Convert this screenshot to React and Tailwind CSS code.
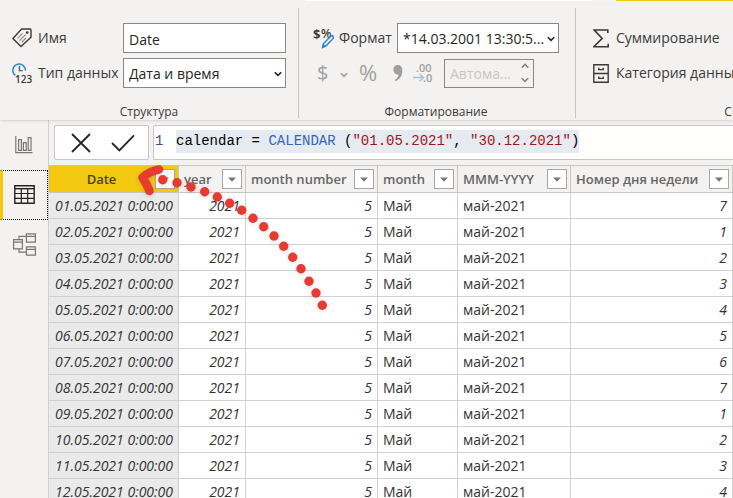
import React from 'react';

const columns = [
  { name: 'Date', width: 'w-[130px]' },
  { name: 'year', width: 'w-[67px]' },
  { name: 'month number', width: 'w-[132px]' },
  { name: 'month', width: 'w-[80px]' },
  { name: 'MMM-YYYY', width: 'w-[113px]' },
  { name: 'Номер дня недели', width: 'w-[162px]' },
];

const rows = [
  ['01.05.2021 0:00:00', 7],
  ['02.05.2021 0:00:00', 1],
  ['03.05.2021 0:00:00', 2],
  ['04.05.2021 0:00:00', 3],
  ['05.05.2021 0:00:00', 4],
  ['06.05.2021 0:00:00', 5],
  ['07.05.2021 0:00:00', 6],
  ['08.05.2021 0:00:00', 7],
  ['09.05.2021 0:00:00', 1],
  ['10.05.2021 0:00:00', 2],
  ['11.05.2021 0:00:00', 3],
  ['12.05.2021 0:00:00', 4],
];

const arrowDots = [
  [162.7, 179.7], [177, 182.7], [191, 187], [204.7, 191.7],
  [217.3, 197], [229.7, 203.3], [241.7, 210.3], [253, 218.3],
  [263.7, 226.7], [274, 236], [283.7, 246.3], [292.7, 257.3],
  [301, 268.7], [309, 281.3], [316, 293], [322.3, 305.3],
];

const Chevron = ({ className, up }) => (
  <svg className={className} width="8" height="6" viewBox="0 0 8 6" fill="none" stroke="currentColor" strokeWidth="1.6">
    <path d={up ? 'M0.8 4.6 4 1.4l3.2 3.2' : 'M0.8 1.2 4 4.4l3.2-3.2'} />
  </svg>
);

const TagIcon = () => (
  <svg width="20" height="20" viewBox="0 0 20 20" fill="none" stroke="#3b3a39" strokeWidth="1.4">
    <path d="M0.9 10.5 9.6 1h8.7l.7 1v7.2L9 18.6z" strokeLinejoin="round" />
    <circle cx="15.2" cy="4.6" r="1.3" fill="#3b3a39" stroke="none" />
    <path d="M5.6 10.4l5-5M7.6 12.6l6-6M9.6 14.4l4.4-4.4" stroke="#8a8886" strokeWidth="1.1" />
  </svg>
);

const DataTypeIcon = () => (
  <svg className="overflow-visible" width="21" height="21" viewBox="0 0 21 21" fill="none">
    <path d="M3.4 12.4A6.3 6.3 0 1 1 13.4 7.6" stroke="#2b88c9" strokeWidth="1.4" />
    <path d="M7.4 3v4.6h3.4" stroke="#605e5c" strokeWidth="1.4" />
    <text x="3" y="20" fontSize="10" fontWeight="600" fill="#3b3a39" fontFamily="'Open Sans', sans-serif">123</text>
  </svg>
);

const FormatIcon = () => (
  <svg className="overflow-visible" width="22" height="21" viewBox="0 0 22 21" fill="none">
    <text x="0" y="11" fontSize="13" fontWeight="700" fill="#3b3a39" fontFamily="'Open Sans', sans-serif">$</text>
    <text x="8" y="10" fontSize="12" fontWeight="600" fill="#3b3a39" fontFamily="'Open Sans', sans-serif">%</text>
    <path d="M9.6 19.4l1-3.8L18 8q1.2-.8 2 .2t.2 2.2L13 17.8z" fill="#f3f2f1" stroke="#2b88c9" strokeWidth="1.5" />
    <path d="M8.6 20.2l1.2-4.6 3.4 3z" fill="#2b88c9" />
  </svg>
);

const DecimalIcon = () => (
  <svg className="overflow-visible" width="21" height="20" viewBox="0 0 21 20" fill="none">
    <text x="3" y="9" fontSize="11" fontWeight="600" fill="#a19f9d" fontFamily="'Open Sans', sans-serif">.00</text>
    <text x="10" y="19" fontSize="11" fontWeight="600" fill="#a19f9d" fontFamily="'Open Sans', sans-serif">.0</text>
    <path d="M0 14.5h10M6.6 10.8l3.8 3.7-3.8 3.7" stroke="#9fc5e3" strokeWidth="1.5" />
  </svg>
);

const SigmaIcon = () => (
  <svg width="16" height="19" viewBox="0 0 16 19" fill="none" stroke="#3b3a39" strokeWidth="1.6">
    <path d="M14.8 4V1H1.2l8 8.4-8.4 8.4h14.4v-3" />
  </svg>
);

const CabinetIcon = () => (
  <svg width="16" height="19" viewBox="0 0 16 19" fill="none" stroke="#3b3a39" strokeWidth="1.4">
    <path d="M.8.8h14.4v17.4H.8zM.8 9.5h14.4" />
    <path d="M5.8 3.8v1.8h4.4V3.8M5.8 12.6v1.8h4.4v-1.8" />
  </svg>
);

const ReportIcon = () => (
  <svg width="18" height="18" viewBox="0 0 18 18" fill="none" stroke="#797775" strokeWidth="1.2">
    <path d="M.8 0v16.6H17.5" />
    <path d="M3.6 3.6h2.8v10.8H3.6zM8.4 6.6h2.8v7.8H8.4zM13.2 1.6H16v12.8h-2.8z" />
  </svg>
);

const DataIcon = () => (
  <svg width="21" height="19" viewBox="0 0 21 19" fill="none" stroke="#252423" strokeWidth="1.4">
    <path d="M.8.8h19.4v17.4H.8z" />
    <path d="M.8 3.7h19.4" />
    <path d="M1 8.5h19M1 13.3h19M7.3 4v14M13.7 4v14" strokeWidth="1.2" />
  </svg>
);

const ModelIcon = () => (
  <svg width="23" height="23" viewBox="0 0 23 23" fill="none" stroke="#797775" strokeWidth="1.2">
    <path d="M.6 6.6h8.8v9.2H.6zM.6 9.2h8.8" />
    <path d="M13.4.8h9v8.4h-9zM13.4 3.4h9M13.4 13.8h9v8.4h-9zM13.4 16.4h9" />
    <path d="M6 6.6V3.4h7.4M6 15.8v3.4h7.4" />
  </svg>
);

const FilterButton = ({ name }) => (
  <button aria-label={`Фильтр ${name}`} className="flex h-5 w-5 shrink-0 items-center justify-center border border-[#a6a6a6] bg-white">
    <svg width="8" height="5" viewBox="0 0 8 5" fill="#777777">
      <path d="M0 .5h8L4 4.8z" />
    </svg>
  </button>
);

const Ribbon = () => (
  <header className="relative z-10 flex h-[120px] shrink-0 overflow-hidden bg-[#f3f2f1] pt-2 pb-0.5 text-sm text-[#3b3a39] shadow-sm">
    <div className="absolute inset-x-0 top-0 flex h-px">
      <div className="w-[305px]" />
      <div className="w-[287px] bg-white" />
      <div className="w-6 bg-[#f9f8f7]" />
      <div className="flex-1 bg-[#f2c811]" />
    </div>

    <section className="flex w-[299px] shrink-0 flex-col justify-between border-r border-[#c8c6c4] pt-[15px] pr-3 pl-3">
      <div className="flex flex-col gap-[5px]">
        <div className="flex items-center">
          <label htmlFor="name" className="flex w-[111px] items-center gap-1.5 whitespace-nowrap">
            <TagIcon />
            Имя
          </label>
          <input id="name" defaultValue="Date" className="h-[30px] min-w-0 flex-1 border border-[#8a8886] bg-white px-[5px] pt-0.5 text-[#252423]" />
        </div>
        <div className="flex items-center">
          <label htmlFor="type" className="flex w-[111px] items-center gap-[5px] whitespace-nowrap">
            <DataTypeIcon />
            Тип данных
          </label>
          <div className="relative min-w-0 flex-1">
            <select id="type" className="block h-[30px] w-full appearance-none border border-[#8a8886] bg-white px-[5px] pt-0.5 text-[#252423]">
              <option>Дата и время</option>
            </select>
            <Chevron className="pointer-events-none absolute top-[13px] right-1 text-[#252423]" />
          </div>
        </div>
      </div>
      <h2 className="text-center text-xs leading-3">Структура</h2>
    </section>

    <section className="flex w-[277px] shrink-0 flex-col justify-between border-r border-[#c8c6c4] pt-[15px] pr-4 pl-3.5">
      <div className="flex flex-col gap-[5px]">
        <div className="flex items-center">
          <label htmlFor="format" className="flex w-[84px] items-center gap-1 whitespace-nowrap">
            <FormatIcon />
            Формат
          </label>
          <div className="relative min-w-0 flex-1">
            <select id="format" className="block h-[30px] w-full appearance-none border border-[#8a8886] bg-white px-[5px] pt-0.5 text-[#252423]">
              <option>*14.03.2001 13:30:5...</option>
            </select>
            <Chevron className="pointer-events-none absolute top-[13px] right-1 text-[#252423]" />
          </div>
        </div>
        <div className="flex h-[30px] items-center text-[#a19f9d]">
          <button aria-label="Валюта" className="flex w-[43px] items-center gap-3 pl-1 text-xl">
            $
            <Chevron className="mt-1 shrink-0" />
          </button>
          <button aria-label="Процент" className="w-6 text-[22px]">%</button>
          <button aria-label="Разделитель" className="flex w-[23px] justify-end">
            <svg width="10" height="17" viewBox="0 0 10 17" fill="#a19f9d">
              <path d="M4.6 0C7.6 0 9.4 2 9.4 5.4c0 5-2.6 9-7 10.8l-.6-1.2c2.4-1.4 3.6-3.4 3.6-5.4C2.4 9.8.4 7.4.4 4.6.4 1.8 2.2 0 4.6 0z" />
            </svg>
          </button>
          <button aria-label="Десятичные" className="ml-2.5">
            <DecimalIcon />
          </button>
          <div className="relative ml-2.5 w-[90px]">
            <input aria-label="Знаки" defaultValue="Автома..." disabled className="block h-[29px] w-full border border-[#8a8886] px-[5px] text-[#c8c6c4]" />
            <div className="absolute top-1 right-[5px] flex flex-col gap-2 text-[#8a8886]">
              <Chevron up />
              <Chevron />
            </div>
          </div>
        </div>
      </div>
      <h2 className="text-center text-xs leading-3">Форматирование</h2>
    </section>

    <section className="flex w-[334px] shrink-0 flex-col justify-between pt-[15px] pl-[17px]">
      <div className="flex flex-col items-start gap-[5px]">
        <button className="flex h-[30px] items-center gap-[7px] whitespace-nowrap">
          <SigmaIcon />
          Суммирование
        </button>
        <button className="flex h-[30px] items-center gap-[7px] whitespace-nowrap">
          <CabinetIcon />
          Категория данных
        </button>
      </div>
      <h2 className="text-center text-xs leading-3">Свойства</h2>
    </section>
  </header>
);

const SideBar = () => (
  <nav className="flex w-[49px] shrink-0 flex-col border-r border-[#d2d0ce] bg-[#f3f2f1]">
    <button aria-label="Отчет" className="flex h-[50px] items-center justify-center">
      <ReportIcon />
    </button>
    <button aria-label="Данные" className="flex h-[50px] items-center justify-center border border-l-3 border-dotted border-black pr-0.5 pb-0.5 [border-left-color:#f2c811] [border-left-style:solid]">
      <DataIcon />
    </button>
    <button aria-label="Модель" className="flex h-[50px] items-center justify-center pb-0.5">
      <ModelIcon />
    </button>
  </nav>
);

const FormulaBar = () => (
  <div className="flex h-[45px] shrink-0 gap-1 bg-[#f3f2f1] pt-[5px] pb-[5px] pl-[5px]">
    <div className="flex w-[95px] shrink-0 items-center justify-center gap-5 rounded-xs border border-[#c8c6c4] bg-white pl-0.5">
      <button aria-label="Отмена">
        <svg width="20" height="20" viewBox="0 0 20 20" fill="none" stroke="#252423" strokeWidth="1.8">
          <path d="M1 1l18 18M19 1L1 19" />
        </svg>
      </button>
      <button aria-label="Применить">
        <svg width="24" height="18" viewBox="0 0 24 18" fill="none" stroke="#252423" strokeWidth="1.8">
          <path d="M1 9l7.4 7.4L23 1.4" />
        </svg>
      </button>
    </div>
    <div className="flex min-w-0 flex-1 items-start rounded-l-xs border border-r-0 border-[#c8c6c4] bg-[#fffffe] pt-1 font-['Liberation_Mono',monospace] text-sm leading-[23px] whitespace-pre">
      <span className="w-[22px] pl-px text-[#3b4a9c]">1</span>
      <code className="bg-[#e5ebf1] font-['Liberation_Mono',monospace] text-black">
        calendar = <span className="text-[#3165bb]">CALENDAR</span> (<span className="text-[#a31515]">"01.05.2021"</span>, <span className="text-[#a31515]">"30.12.2021"</span>)
      </code>
    </div>
  </div>
);

const DataTable = () => (
  <table className="w-full min-w-[684px] table-fixed border-separate border-spacing-0 text-sm text-[#333333]">
    <thead>
      <tr>
        {columns.map((col, i) => (
          <th
            key={col.name}
            className={`${col.width} h-7 border-t border-r border-b border-[#c8c6c4] p-0 text-[13px] font-semibold whitespace-nowrap ${i === 0 ? 'bg-[#f2c811] text-[#4a4220]' : 'bg-[#f3f2f1] text-[#666666]'}`}
          >
            <div className="flex items-center pr-[3px] pl-[5px]">
              <span className={i === 0 ? 'flex-1 pr-1.5 text-center' : 'flex-1 text-left'}>{col.name}</span>
              <FilterButton name={col.name} />
            </div>
          </th>
        ))}
      </tr>
    </thead>
    <tbody className="[&_td]:h-[26px] [&_td]:border-r [&_td]:border-b [&_td]:border-[#d0d0d0] [&_td]:px-[5px] [&_td]:py-0 [&_td]:leading-5">
      {rows.map(([date, weekday]) => (
        <tr key={date}>
          <td className="bg-[#eaeaea] text-right whitespace-nowrap italic">{date}</td>
          <td className="text-right italic">2021</td>
          <td className="text-right italic">5</td>
          <td>Май</td>
          <td>май-2021</td>
          <td className="text-right italic">{weekday}</td>
        </tr>
      ))}
    </tbody>
  </table>
);

// Hand-drawn pointer from the data rows up to the Date header
const PointerArrow = () => (
  <svg className="pointer-events-none absolute top-0 left-0 z-20 drop-shadow-sm" width="340" height="320" viewBox="0 0 340 320" fill="#e53b30">
    <path d="M159 169.500Q149 171.500 142.500 177.500Q147 184 149.500 191" fill="none" stroke="#e53b30" strokeWidth="8.500" strokeLinecap="round" strokeLinejoin="round" />
    {arrowDots.map(([cx, cy]) => (
      <circle key={cx} cx={cx} cy={cy} r="4.7" />
    ))}
  </svg>
);

export default function App() {
  return (
    <div className="relative flex h-screen flex-col overflow-hidden bg-white font-['Open_Sans','Noto_Sans',sans-serif]">
      <Ribbon />
      <div className="flex min-h-0 flex-1">
        <SideBar />
        <main className="flex min-w-0 flex-1 flex-col overflow-hidden">
          <FormulaBar />
          <DataTable />
        </main>
      </div>
      <PointerArrow />
    </div>
  );
}
